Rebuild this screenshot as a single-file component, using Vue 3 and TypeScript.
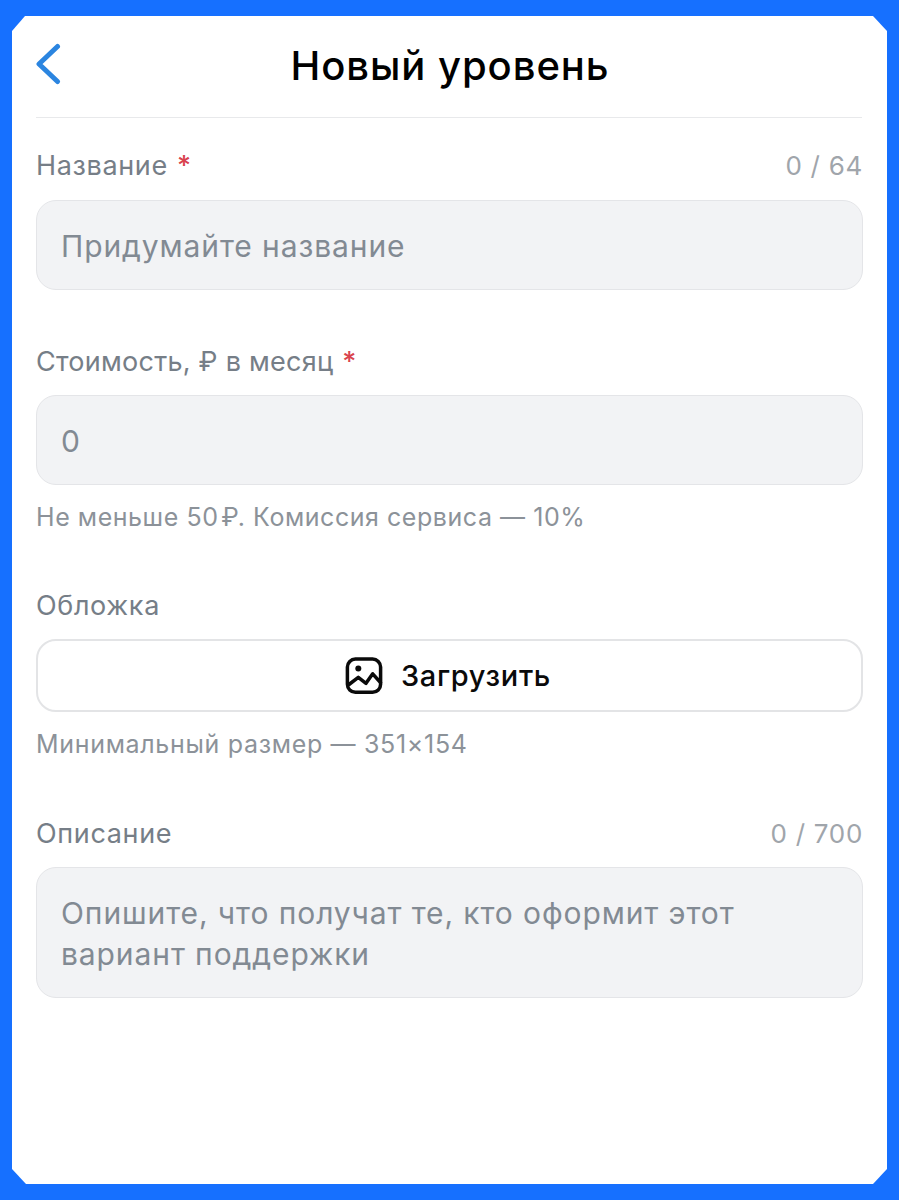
<script setup lang="ts">
const title = 'Новый уровень'
</script>

<template>
  <div class="page">
    <main class="card">
      <header class="head">
        <svg class="back" width="26" height="42" viewBox="0 0 26 42" fill="none"><path d="M22.5 3.5 L4 21 L22.5 38.5" stroke="#2b85e0" stroke-width="5" stroke-linecap="round" stroke-linejoin="round"/></svg>
        <h1>{{ title }}</h1>
      </header>

      <section class="first">
        <div class="row"><span class="label">Название <b>*</b></span><span class="count">0 / 64</span></div>
        <div class="field">Придумайте название</div>
      </section>

      <section class="second">
        <div class="row"><span class="label narrow">Стоимость, ₽ в месяц <b>*</b></span></div>
        <div class="field tight">0</div>
        <p class="hint short">Не меньше 50&#8202;₽. Комиссия сервиса — 10%</p>
      </section>

      <section class="third">
        <div class="row"><span class="label">Обложка</span></div>
        <div class="upload">
          <svg width="38" height="38" viewBox="0 0 38 38" fill="none" stroke="#0a0a0a" stroke-width="3.5" stroke-linecap="round" stroke-linejoin="round">
            <rect x="2.4" y="2.1" width="33.2" height="33.2" rx="8"/>
            <circle cx="13.3" cy="11.5" r="3" fill="#0a0a0a" stroke="none"/>
            <path d="M4 27.5 L13.3 20.3 L21 26.3 L27.7 16.8 L35.5 25.5"/>
          </svg>
          <span>Загрузить</span>
        </div>
        <p class="hint">Минимальный размер — 351×154</p>
      </section>

      <section class="fourth">
        <div class="row"><span class="label">Описание</span><span class="count">0 / 700</span></div>
        <div class="field tight area">Опишите, что получат те, кто оформит этот вариант поддержки</div>
      </section>
    </main>
  </div>
</template>

<style>
html, body { margin: 0; background: #1670ff; }
</style>

<style scoped>
.page {
  box-sizing: border-box;
  height: 1200px;
  padding: 16px 12px;
  background: #1670ff;
  font-family: Inter, "Noto Sans", sans-serif;
}
.card {
  box-sizing: border-box;
  height: 1168px;
  padding: 0 24px;
  background: #fff;
  clip-path: polygon(13px 0, calc(100% - 14px) 0, 100% 15px, 100% calc(100% - 15px), calc(100% - 14px) 100%, 14px 100%, 0 calc(100% - 15px), 0 15px);
}
.head {
  position: relative;
  height: 101px;
  margin-right: 1px;
  border-bottom: 1px solid #e8e9eb;
  display: flex;
  align-items: center;
  justify-content: center;
}
.back { position: absolute; left: -1px; top: 27px; }
h1 {
  margin: 0 0 1px 2px;
  font-size: 40px;
  line-height: 48px;
  font-weight: 500;
  letter-spacing: 0.95px;
  color: #000;
}
.row { display: flex; justify-content: space-between; align-items: center; height: 32px; }
.label { font-size: 27px; letter-spacing: 0.65px; color: #767e87; }
.narrow { letter-spacing: 0.25px; }
.label b { color: #d9434e; font-weight: 500; margin-left: 1px; }
.count { font-size: 26px; letter-spacing: 0.7px; color: #a0a5ab; }
.first { margin-top: 31px; }
.second { margin-top: 55px; }
.third { margin-top: 56px; }
.fourth { margin-top: 57px; }
.field {
  box-sizing: border-box;
  margin-top: 19px;
  height: 90px;
  padding: 2px 24px 0;
  display: flex;
  align-items: center;
  background: #f2f3f5;
  border: 1px solid #e4e5e8;
  border-radius: 20px;
  font-size: 30px;
  letter-spacing: 0.9px;
  color: #828a93;
}
.tight { margin-top: 18px; }
.area { height: 131px; line-height: 41px; padding-top: 3px; }
.upload {
  box-sizing: border-box;
  margin-top: 18px;
  height: 73px;
  padding-right: 3px;
  display: flex;
  align-items: center;
  justify-content: center;
  gap: 18px;
  border: 2px solid #e3e4e6;
  border-radius: 20px;
  font-size: 29px;
  font-weight: 500;
  letter-spacing: 0.65px;
  color: #0a0a0a;
}
.hint { margin: 16px 0 0; font-size: 25px; line-height: 32px; letter-spacing: 0.68px; color: #8c9299; }
.short { letter-spacing: 0.55px; }
</style>
